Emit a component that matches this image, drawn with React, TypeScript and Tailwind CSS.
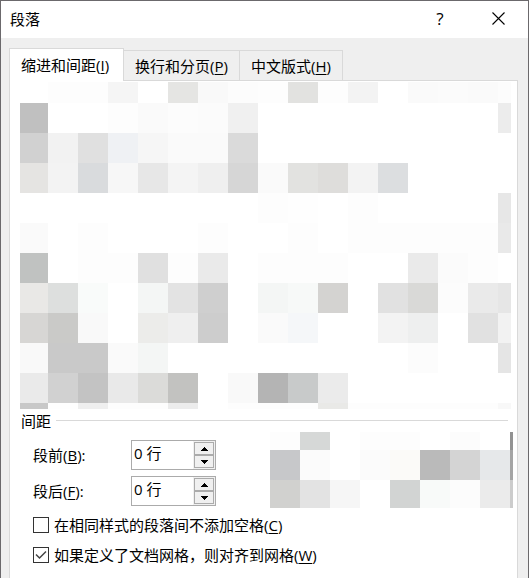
import React, { useState } from "react";

type Tab = { id: string; label: string; hotkey: string };

const tabs: Tab[] = [
  { id: "indent", label: "缩进和间距", hotkey: "I" },
  { id: "breaks", label: "换行和分页", hotkey: "P" },
  { id: "asian", label: "中文版式", hotkey: "H" },
];

// one string per row, "." is an empty cell
const indentBlocks = [
  ". fdfdfd fdfdfd f5f5f5 . e5e5e3 f9f9f9 fcfcfc fdfdfd e2e2e0 fdfdfd f3f3f3 . fafafa fbfbfb fafafa fcfcfc",
  "c0c0c0 . . fdfdfd fafafa fcfcfc fbfbfb f0f0f0 . . . . . . . . ececec",
  "d1d1d1 f2f2f2 e0e0e0 eff1f4 f6f6f6 fafafa fafafa dadada . . . . . . . . .",
  "e5e4e2 f3f3f3 d9dbdd f7f7f7 e7e7e7 f4f4f4 efefef d6d6d6 fafafa e2e2e0 dedddb f3f3f3 dcdee0 . . . .",
  ". . . . . . . . fdfdfd fefefe . fdfdfd . . . . e7e7e7",
  "fafafa . fdfdfd . . . fdfdfd . . fdfdfd . fdfdfd fdfdfd fdfdfd fdfdfd fdfdfd e9e9e9",
  "c0c2c1 . fdfdfd fdfdfd e0e0e0 fdfdfd eaeaea . fdfdfd fdfdfd fdfdfd . . eaeaea fbfbfb fdfdfd .",
  "e9e8e6 dddfde f9fbfa . f4f6f5 e3e3e3 cfcfcf . f4f6f5 f7f9f8 d4d3d1 . e1e1e1 d9d9d7 fcfcfc eaeaea e6e6e6",
  "d7d6d4 cacac8 f9f9f9 . ececea efefef cdcdcd . fafafa f5f7f9 . . f3f3f3 eeefef . e1e1e1 f2f2f2",
  "f9f9f9 c9c9c9 c9c9c9 fafafa f4f6f5 . . . . . . . . fcfcfc . . e5e5e5",
  "eaeaea d1d1d1 c3c3c3 e9e9e9 dbdbd9 c2c2c0 . f9f9f9 b4b4b4 c8caca ebebeb . . . . . .",
  "c8c8c8 fefefe efefef fdfdfd fdfdfd ececec . fdfdfd fdfdfd fdfdfd e9e9e7 fdfdfd fdfdfd fdfdfd fdfdfd fdfdfd f8f8f8",
];

const lineBlocks = [
  "fdfdfd d6d8d7 . fdfdfd fdfdfd . fcfcfc . 929292",
  "c7c8ca fbfbfb . fbfbfb fbfaf8 bababa d4d4d4 e6e8ea a5a5a5",
  "d1d1cf e3e3e3 f6f6f6 . d2d4d3 f8faf9 fcfcfc ebebeb cccccc",
];

function Blocks({ rows, className }: { rows: string[]; className: string }) {
  return (
    <div aria-hidden="true" className={`grid ${className}`}>
      {rows.flatMap((row, y) =>
        row.split(" ").map((c, x) => (
          <div
            key={`${y}-${x}`}
            style={{ backgroundColor: c === "." ? undefined : `#${c}` }}
          />
        ))
      )}
    </div>
  );
}

function Hotkey({ children }: { children: string }) {
  return (
    <>
      (<u className="underline-offset-2">{children}</u>)
    </>
  );
}

function Spinner({
  id,
  label,
  hotkey,
}: {
  id: string;
  label: string;
  hotkey: string;
}) {
  const [lines, setLines] = useState(0);

  return (
    <div className="flex h-[30px] items-center">
      <label htmlFor={id} className="w-[98px] shrink-0 whitespace-nowrap">
        {label}
        <Hotkey>{hotkey}</Hotkey>:
      </label>
      <div className="flex h-full w-[85px] border border-[#ababab] bg-white">
        <input
          id={id}
          type="text"
          value={`${lines} 行`}
          onChange={(e) => setLines(parseFloat(e.target.value) || 0)}
          className="h-full w-full min-w-0 pb-1.5 pl-0.5 outline-none"
        />
        <div className="flex w-[22px] shrink-0 flex-col bg-[#f0f0f0] p-px">
          <button
            type="button"
            aria-label={`增加${label}`}
            onClick={() => setLines(lines + 0.5)}
            className="flex flex-1 items-center justify-center border border-[#ababab]"
          >
            <svg width="7" height="4" viewBox="0 0 7 4" shapeRendering="crispEdges">
              <path d="M3 0h1v1h1v1h1v1h1v1H0V3h1V2h1V1h1z" />
            </svg>
          </button>
          <button
            type="button"
            aria-label={`减少${label}`}
            onClick={() => setLines(Math.max(0, lines - 0.5))}
            className="flex flex-1 items-center justify-center border border-[#ababab]"
          >
            <svg width="7" height="4" viewBox="0 0 7 4" shapeRendering="crispEdges">
              <path d="M3 4h1V3h1V2h1V1h1V0H0v1h1v1h1v1h1z" />
            </svg>
          </button>
        </div>
      </div>
    </div>
  );
}

function Check({
  label,
  hotkey,
  checked,
}: {
  label: string;
  hotkey: string;
  checked?: boolean;
}) {
  return (
    <label className="flex h-[30px] items-center gap-[5px] whitespace-nowrap">
      <span className="grid size-4 shrink-0 place-items-center">
        <input
          type="checkbox"
          defaultChecked={checked}
          className="peer col-start-1 row-start-1 size-4 appearance-none border border-[#333] bg-white"
        />
        <svg
          width="12"
          height="10"
          viewBox="0 0 12 10"
          className="pointer-events-none invisible col-start-1 row-start-1 peer-checked:visible"
        >
          <path d="M1 4.5 4.5 8 11 1.5" fill="none" stroke="#444" strokeWidth="1.5" />
        </svg>
      </span>
      <span>
        {label}
        <Hotkey>{hotkey}</Hotkey>
      </span>
    </label>
  );
}

export default function App() {
  const [active, setActive] = useState("indent");

  return (
    <div className="flex min-h-screen flex-col border-x border-t border-[#6b696c] bg-[#efefef] font-['Open_Sans','Noto_Sans_CJK_SC',sans-serif] text-[15px] leading-5 text-black">
      <header className="flex h-[37px] items-center justify-between bg-white pb-0.5 pl-[9px]">
        <h1>段落</h1>
        <div className="flex h-full">
          <button type="button" aria-label="帮助" className="w-[56px] text-[17px]">
            ?
          </button>
          <button
            type="button"
            aria-label="关闭"
            className="flex w-[60px] items-center justify-center"
          >
            <svg width="13" height="13" viewBox="0 0 13 13">
              <path d="M.5.5l12 12M12.5.5l-12 12" stroke="#000" strokeWidth="1.1" />
            </svg>
          </button>
        </div>
      </header>

      <div role="tablist" className="flex items-end px-2 pt-[10px]">
        {tabs.map((t) => (
          <button
            key={t.id}
            type="button"
            role="tab"
            aria-selected={active === t.id}
            onClick={() => setActive(t.id)}
            className={
              active === t.id
                ? "relative z-10 -mb-px h-[33px] border border-b-0 border-[#d9d9d9] bg-white pr-[14px] pl-[11px] whitespace-nowrap"
                : "h-[30px] border-t border-r border-[#d9d9d9] px-[11px] whitespace-nowrap"
            }
          >
            {t.label}
            <Hotkey>{t.hotkey}</Hotkey>
          </button>
        ))}
      </div>

      <main
        role="tabpanel"
        className="mr-[10px] ml-2 flex-1 border-x border-t border-[#d9d9d9] bg-white pt-px"
      >
        <Blocks
          rows={indentBlocks}
          className="mr-1.5 ml-2.5 grid-cols-[28fr_repeat(15,30fr)_13fr] grid-rows-[21px_repeat(10,30px)_6px]"
        />

        <section>
          <div className="mr-[9px] ml-[11px] flex h-[23px] items-center gap-[5px]">
            <h2>间距</h2>
            <div className="h-px flex-1 bg-[#d9d9d9]" />
          </div>

          <div className="mr-1 ml-[23px] flex gap-[54px]">
            <div className="flex shrink-0 flex-col gap-1.5 pt-2">
              <Spinner id="before" label="段前" hotkey="B" />
              <Spinner id="after" label="段后" hotkey="F" />
            </div>
            <Blocks
              rows={lineBlocks}
              className="flex-1 grid-cols-[repeat(8,30fr)_3fr] grid-rows-[18px_30px_28px]"
            />
          </div>

          <div className="mt-0.5 ml-[23px]">
            <Check label="在相同样式的段落间不添加空格" hotkey="C" />
            <Check label="如果定义了文档网格，则对齐到网格" hotkey="W" checked />
          </div>
        </section>
      </main>
    </div>
  );
}
